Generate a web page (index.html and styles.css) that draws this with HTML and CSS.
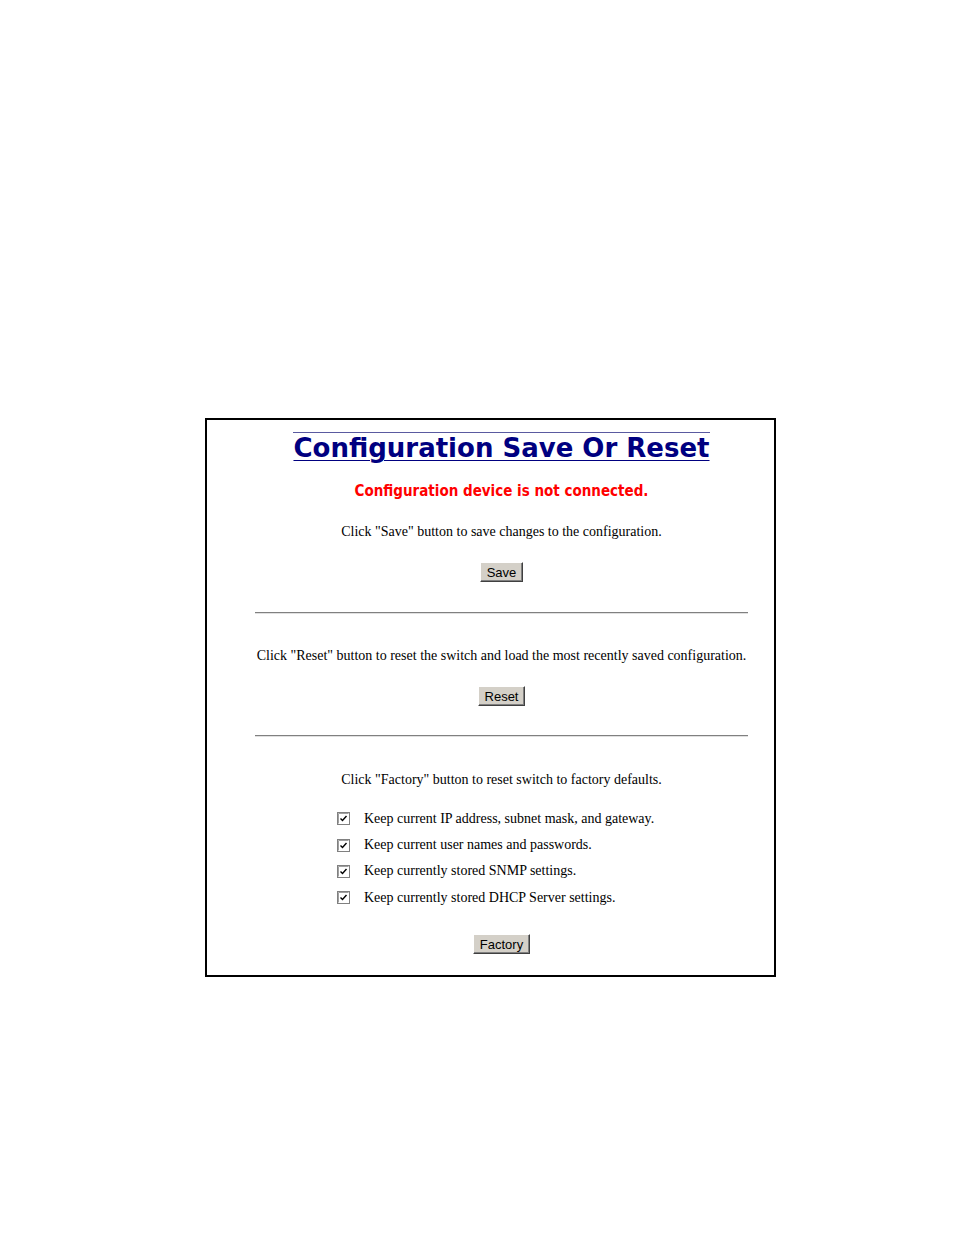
FILE: index.html
```html
<!DOCTYPE html>
<html>
<head>
<meta charset="utf-8">
<link rel="stylesheet" href="styles.css">
</head>
<body>
<div class="panel">
  <div class="title-wrap"><span class="title">Configuration Save Or Reset</span></div>
  <div class="warn">Configuration device is not connected.</div>
  <p class="txt t-save">Click "Save" button to save changes to the configuration.</p>
  <div class="btn-row b-save"><button class="btn">Save</button></div>
  <div class="rule r1"></div>
  <p class="txt t-reset">Click "Reset" button to reset the switch and load the most recently saved configuration.</p>
  <div class="btn-row b-reset"><button class="btn">Reset</button></div>
  <div class="rule r2"></div>
  <p class="txt t-factory">Click "Factory" button to reset switch to factory defaults.</p>
  <ul class="opts">
    <li class="opt"><span class="cb"><svg width="13" height="13" viewBox="0 0 13 13"><rect x="0.5" y="0.5" width="12" height="12" fill="#fff" stroke="#808080"/><path d="M1.5 1.5h10M1.5 1.5v10" stroke="#a0a0a0"/><path d="M3.5 6.5l2 2 4-4.5" fill="none" stroke="#000" stroke-width="1.4"/></svg></span>Keep current IP address, subnet mask, and gateway.</li>
    <li class="opt"><span class="cb"><svg width="13" height="13" viewBox="0 0 13 13"><rect x="0.5" y="0.5" width="12" height="12" fill="#fff" stroke="#808080"/><path d="M1.5 1.5h10M1.5 1.5v10" stroke="#a0a0a0"/><path d="M3.5 6.5l2 2 4-4.5" fill="none" stroke="#000" stroke-width="1.4"/></svg></span>Keep current user names and passwords.</li>
    <li class="opt"><span class="cb"><svg width="13" height="13" viewBox="0 0 13 13"><rect x="0.5" y="0.5" width="12" height="12" fill="#fff" stroke="#808080"/><path d="M1.5 1.5h10M1.5 1.5v10" stroke="#a0a0a0"/><path d="M3.5 6.5l2 2 4-4.5" fill="none" stroke="#000" stroke-width="1.4"/></svg></span>Keep currently stored SNMP settings.</li>
    <li class="opt"><span class="cb"><svg width="13" height="13" viewBox="0 0 13 13"><rect x="0.5" y="0.5" width="12" height="12" fill="#fff" stroke="#808080"/><path d="M1.5 1.5h10M1.5 1.5v10" stroke="#a0a0a0"/><path d="M3.5 6.5l2 2 4-4.5" fill="none" stroke="#000" stroke-width="1.4"/></svg></span>Keep currently stored DHCP Server settings.</li>
  </ul>
  <div class="btn-row b-factory"><button class="btn">Factory</button></div>
</div>
</body>
</html>
```
FILE: styles.css
```css
html, body {
  margin: 0;
  padding: 0;
  background: #fff;
}
.panel {
  margin: 418px 0 0 205px;
  border: 2px solid #000;
  padding: 12px 26px 21px 48px;
  box-sizing: content-box;
  width: 493px;
}
.title-wrap {
  text-align: center;
  line-height: 30px;
  height: 31px;
}
.title {
  display: inline-block;
  font-family: "DejaVu Sans", Verdana, sans-serif;
  font-weight: bold;
  font-size: 26px;
  color: #000080;
  text-decoration: underline;
  text-decoration-thickness: 1px;
  text-underline-offset: 3px;
  border-top: 1px solid #5a5aa0;
}
.warn {
  margin-top: 19px;
  text-align: center;
  font-family: "DejaVu Sans Condensed", "DejaVu Sans", Tahoma, sans-serif;
  font-stretch: condensed;
  font-weight: bold;
  font-size: 15px;
  line-height: 18px;
  color: #ff0000;
}
.txt {
  margin: 0;
  text-align: center;
  font-family: "Liberation Serif", "Times New Roman", serif;
  font-size: 14px;
  line-height: 16px;
  color: #000;
}
.t-save { margin-top: 24px; }
.t-reset { margin-top: 34px; }
.t-factory { margin-top: 35px; }
.btn-row {
  text-align: center;
  height: 20px;
}
.b-save, .b-reset { margin-top: 22px; }
.b-factory { margin-top: 23px; }
.btn {
  height: 20px;
  padding: 0 6px;
  margin: 0;
  font-family: "Liberation Sans", Arial, sans-serif;
  font-size: 13px;
  color: #000;
  background: #d4d0c8;
  border: 1px solid;
  border-color: #ffffff #404040 #404040 #ffffff;
  box-shadow: inset -1px -1px 0 #808080;
  vertical-align: top;
}
.rule {
  height: 0;
  border-top: 1px solid #808080;
  border-bottom: 1px solid #e0e0e0;
}
.r1 { margin-top: 30px; }
.r2 { margin-top: 29px; }
.opts {
  list-style: none;
  margin: 17.5px 0 0 0;
  padding: 0 0 0 82px;
}
.opt {
  display: flex;
  align-items: center;
  height: 26.4px;
  font-family: "Liberation Serif", "Times New Roman", serif;
  font-size: 14px;
  color: #000;
}
.cb {
  display: inline-flex;
  width: 13px;
  height: 13px;
  margin-right: 14px;
}
```
